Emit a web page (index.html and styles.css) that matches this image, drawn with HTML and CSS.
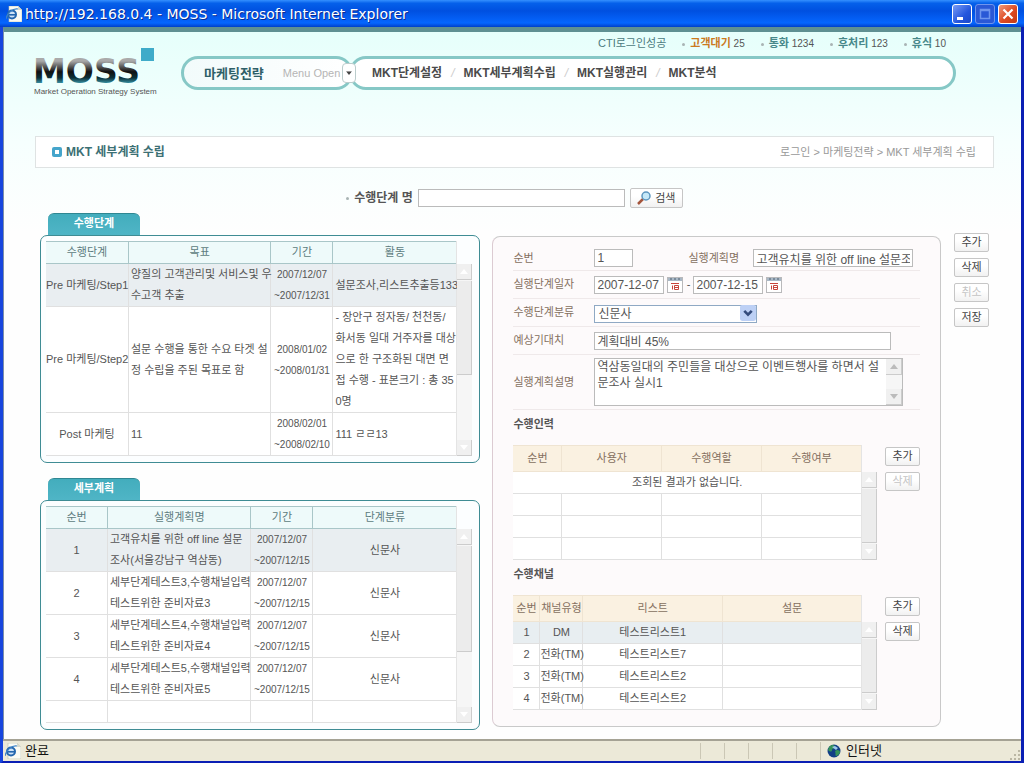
FILE: index.html
```html
<!DOCTYPE html>
<html lang="ko">
<head>
<meta charset="utf-8">
<title>MOSS</title>
<link rel="stylesheet" href="styles.css">
</head>
<body>
<svg class="defs" aria-hidden="true">
  <symbol id="up" viewBox="0 0 8 5"><path d="M0 5 4 0 8 5Z" fill="currentColor"/></symbol>
  <symbol id="down" viewBox="0 0 8 5"><path d="M0 0 4 5 8 0Z" fill="currentColor"/></symbol>
  <symbol id="calendar" viewBox="0 0 16 16">
    <rect x=".5" y=".5" width="15" height="15" fill="#fff" stroke="#b9b9bb"/>
    <path d="M1 2.500h14" stroke="#a9b8c6" stroke-width="3"/>
    <path d="M4 1v2M8 1v2M12 1v2" stroke="#4d5f70"/>
    <path d="M4 6.500h8M5.500 8.500v4M7.500 8.500h4v4h-4zM7.500 10.500h4" fill="none" stroke="#c8443c"/>
  </symbol>
  <symbol id="ie" viewBox="0 0 16 16">
    <path d="M3 0h9l4 4v12H3z" fill="#fbfbf4" stroke="#b8bfae" stroke-width=".6"/>
    <path d="M12 0v4h4" fill="#d5d9cf"/>
    <circle cx="6" cy="8.500" r="4" fill="#cfe3f7" stroke="#2567ae" stroke-width="2"/>
    <path d="M3 8.800h7" stroke="#2567ae" stroke-width="1.600"/>
    <path d="M0 13C1 7 7 2 12 3" fill="none" stroke="#3c83c8" stroke-width="1.200"/>
  </symbol>
</svg>

<div class="window">
  <header class="titlebar">
    <svg class="title-icon" aria-hidden="true"><use href="#ie"/></svg>
    <span class="title-text">http://192.168.0.4 - MOSS - Microsoft Internet Explorer</span>
    <button class="win-btn" aria-label="최소화"><svg viewBox="0 0 18 18"><path d="M4 13.500h6" stroke="#fff" stroke-width="3"/></svg></button>
    <button class="win-btn win-dim" aria-label="최대화" disabled><svg viewBox="0 0 18 18"><path d="M4.500 4.500h9v9h-9zM4 5.500h10" fill="none" stroke="#6f95ee" stroke-width="1.500"/></svg></button>
    <button class="win-btn win-close" aria-label="닫기"><svg viewBox="0 0 18 18"><path d="m4.500 4.500 9 9m0-9-9 9" stroke="#fff" stroke-width="2.200"/></svg></button>
  </header>

  <div class="page">
    <div class="header">
      <svg class="logo" viewBox="0 0 120 52" role="img" aria-label="MOSS">
        <defs><linearGradient id="lg" x1="0" y1="13" x2="0" y2="37" gradientUnits="userSpaceOnUse">
          <stop offset="0" stop-color="#aaa"/><stop offset=".45" stop-color="#111"/><stop offset=".7" stop-color="#0c3038"/><stop offset="1" stop-color="#46b2c8"/>
        </linearGradient></defs>
        <rect x="106" y="0" width="13" height="13" fill="#3fabc9"/>
        <text class="logo-word" x="-2" y="35" fill="url(#lg)">MOSS</text>
        <text class="logo-sub" x="-1" y="46">Market Operation Strategy System</text>
      </svg>
      <div class="header-main">
        <ul class="status">
          <li class="cti">CTI로그인성공</li>
          <li class="dot hot"><b>고객대기</b> 25</li>
          <li class="dot"><b>통화</b> 1234</li>
          <li class="dot"><b>후처리</b> 123</li>
          <li class="dot"><b>휴식</b> 10</li>
        </ul>
        <nav class="menu">
          <div class="pill pill-current"><strong>마케팅전략</strong><span>Menu Open</span>
            <button class="toggle" aria-label="메뉴 열기"><svg viewBox="0 0 8 5"><use href="#down"/></svg></button>
          </div>
          <div class="pill pill-links">
            <a href="#">MKT단계설정</a><i>/</i><a href="#">MKT세부계획수립</a><i>/</i><a href="#">MKT실행관리</a><i>/</i><a href="#">MKT분석</a>
          </div>
        </nav>
      </div>
    </div>

    <div class="crumbs">
      <h1><svg viewBox="0 0 10 10" aria-hidden="true"><rect width="10" height="10" rx="2" fill="#45a5cb"/><rect x="3" y="3" width="4" height="4" fill="#fff"/></svg>MKT 세부계획 수립</h1>
      <span>로그인 &gt; 마케팅전략 &gt; MKT 세부계획 수립</span>
    </div>

    <form class="search">
      <label class="dot" for="q">수행단계 명</label>
      <input id="q" type="text">
      <button class="btn btn-search" type="button"><svg viewBox="0 0 14 14" aria-hidden="true"><path d="m1 13 5-5" stroke="#a4553c" stroke-width="2.500"/><circle cx="9" cy="5" r="4" fill="#c5e8f8" stroke="#5d96bf" stroke-width="1.500"/></svg>검색</button>
    </form>

    <main class="content">
      <div class="left">
        <section>
          <h2 class="tab">수행단계</h2>
          <div class="panel">
            <table class="grid">
              <colgroup><col class="w82"><col><col class="w62"><col class="w124"></colgroup>
              <thead><tr><th>수행단계</th><th>목표</th><th>기간</th><th>활동</th></tr></thead>
              <tbody>
                <tr class="sel"><td class="c tight">Pre 마케팅/Step1</td><td>양질의 고객관리및 서비스및 우<br>수고객 추출</td><td class="date">2007/12/07<br>~2007/12/31</td><td>설문조사,리스트추출등133</td></tr>
                <tr><td class="c tight">Pre 마케팅/Step2</td><td>설문 수행을 통한 수요 타겟 설<br>정 수립을 주된 목표로 함</td><td class="date">2008/01/02<br>~2008/01/31</td><td>- 장안구 정자동/ 천천동/<br>화서동 일대 거주자를 대상<br>으로 한 구조화된 대면 면<br>접 수행 - 표본크기 : 총 35<br>0명</td></tr>
                <tr><td class="c tight">Post 마케팅</td><td>11</td><td class="date">2008/02/01<br>~2008/02/10</td><td>111 ㄹㄹ13</td></tr>
              </tbody>
            </table>
            <div class="bar bar-main"><button class="arrow" aria-label="위로"><svg><use href="#up"/></svg></button><div class="thumb thumb-a"></div><div class="track track-a"></div><button class="arrow" aria-label="아래로"><svg><use href="#down"/></svg></button></div>
          </div>
        </section>
        <section>
          <h2 class="tab">세부계획</h2>
          <div class="panel">
            <table class="grid">
              <colgroup><col class="w61"><col><col class="w62"><col class="w144"></colgroup>
              <thead><tr><th>순번</th><th>실행계획명</th><th>기간</th><th>단계분류</th></tr></thead>
              <tbody>
                <tr class="sel"><td class="c">1</td><td>고객유치를 위한 off line 설문<br>조사(서울강남구 역삼동)</td><td class="date">2007/12/07<br>~2007/12/15</td><td class="c">신문사</td></tr>
                <tr><td class="c">2</td><td>세부단계테스트3,수행채널입력<br>테스트위한 준비자료3</td><td class="date">2007/12/07<br>~2007/12/15</td><td class="c">신문사</td></tr>
                <tr><td class="c">3</td><td>세부단계테스트4,수행채널입력<br>테스트위한 준비자료4</td><td class="date">2007/12/07<br>~2007/12/15</td><td class="c">신문사</td></tr>
                <tr><td class="c">4</td><td>세부단계테스트5,수행채널입력<br>테스트위한 준비자료5</td><td class="date">2007/12/07<br>~2007/12/15</td><td class="c">신문사</td></tr>
                <tr class="blank"><td></td><td></td><td></td><td></td></tr>
              </tbody>
            </table>
            <div class="bar bar-main"><button class="arrow" aria-label="위로"><svg><use href="#up"/></svg></button><div class="thumb thumb-b"></div><div class="track track-b"></div><button class="arrow" aria-label="아래로"><svg><use href="#down"/></svg></button></div>
          </div>
        </section>
      </div>

      <section class="detail">
        <form class="form">
          <div class="row row-first">
            <label for="no">순번</label><input id="no" class="w-no" type="text" value="1">
            <label class="second" for="plan">실행계획명</label><input id="plan" class="w-plan" type="text" value="고객유치를 위한 off line 설문조사(서울강남구 역삼동)">
          </div>
          <div class="row">
            <label for="from">실행단계일자</label><input id="from" class="w-date" type="text" value="2007-12-07">
            <button class="cal" type="button" aria-label="시작일 선택"><svg><use href="#calendar"/></svg></button><span class="dash">-</span>
            <input class="w-date" type="text" value="2007-12-15" aria-label="종료일">
            <button class="cal" type="button" aria-label="종료일 선택"><svg><use href="#calendar"/></svg></button>
          </div>
          <div class="row">
            <label for="kind">수행단계분류</label>
            <div class="select"><select id="kind"><option>신문사</option></select><svg viewBox="0 0 15 15" aria-hidden="true"><rect width="15" height="15" rx="2" fill="#bdd0f5"/><path d="m4 5.500 3.500 3.500L11 5.500" fill="none" stroke="#344b7c" stroke-width="2.500"/></svg></div>
          </div>
          <div class="row">
            <label for="hope">예상기대치</label><input id="hope" class="w-hope" type="text" value="계획대비 45%">
          </div>
          <div class="row row-area">
            <label for="desc">실행계획설명</label>
            <div class="area"><textarea id="desc">역삼동일대의 주민들을 대상으로 이벤트행사를 하면서 설문조사 실시1</textarea><div class="bar bar-area"><button class="arrow" type="button" aria-label="위로"><svg><use href="#up"/></svg></button><div class="track track-area"></div><button class="arrow" type="button" aria-label="아래로"><svg><use href="#down"/></svg></button></div></div>
          </div>
        </form>

        <h3>수행인력</h3>
        <div class="sub">
          <table class="grid beige">
            <colgroup><col class="w48"><col><col class="w100"><col class="w100"></colgroup>
            <thead><tr><th>순번</th><th>사용자</th><th>수행역할</th><th>수행여부</th></tr></thead>
            <tbody>
              <tr><td class="c" colspan="4">조회된 결과가 없습니다.</td></tr>
              <tr class="blank"><td></td><td></td><td></td><td></td></tr>
              <tr class="blank"><td></td><td></td><td></td><td></td></tr>
              <tr class="blank"><td></td><td></td><td></td><td></td></tr>
            </tbody>
          </table>
          <div class="bar bar-sub"><button class="arrow" aria-label="위로"><svg><use href="#up"/></svg></button><div class="thumb"></div><button class="arrow" aria-label="아래로"><svg><use href="#down"/></svg></button></div>
          <div class="btns"><button class="btn">추가</button><button class="btn" disabled>삭제</button></div>
        </div>

        <h3>수행채널</h3>
        <div class="sub">
          <table class="grid beige">
            <colgroup><col class="w26"><col class="w43"><col><col class="w139"></colgroup>
            <thead><tr><th>순번</th><th>채널유형</th><th>리스트</th><th>설문</th></tr></thead>
            <tbody>
              <tr class="sel"><td class="c">1</td><td class="c tight">DM</td><td class="c">테스트리스트1</td><td></td></tr>
              <tr><td class="c">2</td><td class="c tight">전화(TM)</td><td class="c">테스트리스트7</td><td></td></tr>
              <tr><td class="c">3</td><td class="c tight">전화(TM)</td><td class="c">테스트리스트2</td><td></td></tr>
              <tr><td class="c">4</td><td class="c tight">전화(TM)</td><td class="c">테스트리스트2</td><td></td></tr>
            </tbody>
          </table>
          <div class="bar bar-sub"><button class="arrow" aria-label="위로"><svg><use href="#up"/></svg></button><div class="thumb"></div><button class="arrow" aria-label="아래로"><svg><use href="#down"/></svg></button></div>
          <div class="btns"><button class="btn">추가</button><button class="btn">삭제</button></div>
        </div>
      </section>

      <div class="btns btns-side"><button class="btn">추가</button><button class="btn">삭제</button><button class="btn" disabled>취소</button><button class="btn">저장</button></div>
    </main>
  </div>

  <footer class="statusbar">
    <svg class="title-icon" aria-hidden="true"><use href="#ie"/></svg>
    <span class="done">완료</span>
    <i></i><i></i><i></i><i></i><i></i>
    <span class="zone"><svg viewBox="0 0 14 14" aria-hidden="true"><circle cx="7" cy="7" r="6.500" fill="#123f86"/><path d="M2 3c3-3 6-2 6 0S5 4 5 6 3 8 1 6zM8 7c2-2 5-1 5 1s-3 4-4 4 0-3-1-5z" fill="#35935a"/><path d="m5 3 3-1 3 2-2 2z" fill="#9cc8ec"/></svg>인터넷</span>
    <svg class="grip" viewBox="0 0 12 12" aria-hidden="true"><path d="M9 1h2v2H9zM5 5h2v2H5zM9 5h2v2H9zM1 9h2v2H1zM5 9h2v2H5zM9 9h2v2H9z" fill="#bbb7a4"/></svg>
  </footer>
</div>
</body>
</html>
```

FILE: styles.css
```css
* { box-sizing: border-box; }
body { margin: 0; font: 11px/21px "Liberation Sans", "Noto Sans CJK KR", sans-serif; color: #555; }
h1, h2, h3, ul { margin: 0; padding: 0; list-style: none; }
button, input, select, textarea { margin: 0; font: inherit; color: inherit; border-radius: 0; }
button { padding: 0; }
.defs { position: absolute; width: 0; height: 0; }

/* Window frame */
.window { display: flex; flex-direction: column; min-height: 100vh; border: solid #0a1fb4; border-width: 0 3px 3px; border-left-color: #1745de; }
.titlebar { display: flex; align-items: center; gap: 3px; height: 27px; margin: 0 -3px; padding: 0 6px; background: linear-gradient(#3590ff, #0560ea 12%, #0050e0 40%, #0566ff 85%, #0040c8); }
.title-icon { width: 16px; height: 16px; flex: none; }
.title-text { flex: 1; font: 14px/20px "DejaVu Sans", sans-serif; color: #fff; text-shadow: 1px 1px 0 #0a2a90; }
.win-btn { width: 20px; height: 20px; border: 1px solid #fff; border-radius: 3px; background: linear-gradient(135deg, #7a9cf5, #2456dd 60%, #1a47c8); }
.win-btn svg { display: block; width: 18px; height: 18px; }
.win-dim { border-color: #6f95ee; background: #2a58d6; }
.win-close { background: linear-gradient(135deg, #f09a7c, #dd4a22 55%, #c23a14); }

.page { flex: 1; padding: 0 27px 9px 31px; border-left: 1px solid #7d8fa8; border-top: 5px solid #5f9092; background: linear-gradient(#e6fffb, #f6fffe 110px, #fefefe 200px); }

/* Header */
.header { display: flex; gap: 26px; padding: 0 38px 36px 0; }
.logo { flex: none; width: 120px; height: 52px; margin-top: 16px; overflow: visible; }
.logo-word { font: bold 33px "DejaVu Sans", sans-serif; }
.logo-sub { font: 8px "Liberation Sans", sans-serif; fill: #555; }
.header-main { flex: 1; }
.status { display: flex; justify-content: flex-end; gap: 16px; height: 24px; padding-right: 10px; line-height: 22px; font-size: 10px; }
.status b, .cti { font-size: 11px; font-weight: bold; color: #47888a; }
.status .hot b { color: #cb7a1e; }
.status .cti { color: #4c7b80; font-weight: normal; -webkit-text-stroke: 0; }
.dot::before { content: ""; display: inline-block; width: 3px; height: 3px; margin-right: 5px; border-radius: 50%; background: #a9b4b4; vertical-align: middle; }
.menu { display: flex; }
.pill { display: flex; align-items: center; height: 34px; border: 3px solid #86c8c6; border-radius: 17px; background: #fff; }
.pill-current { position: relative; flex: none; width: 172px; padding-left: 20px; gap: 19px; font-size: 13px; color: #2f6068; background: linear-gradient(90deg, #f2fbfb, #fff); }
.pill-current span { font-size: 11px; color: #b5b5b5; }
.toggle { position: absolute; right: -6px; top: 4px; z-index: 1; width: 14px; height: 20px; display: grid; place-items: center; border: 1px solid #bcc; border-radius: 4px; background: #fff; color: #444; }
.toggle svg { width: 6px; height: 4px; }
.pill-links { flex: 1; margin-left: -4px; padding-left: 20px; gap: 9px; font-size: 12px; font-weight: bold; }
.pill-links a { color: #4a4a4a; text-decoration: none; }
.pill-links i { font-weight: normal; color: #ccc; }

.crumbs { display: flex; justify-content: space-between; align-items: center; height: 32px; padding: 0 17px 0 16px; border: 1px solid #dfe3e3; background: #fff; color: #999; }
.crumbs h1 { display: flex; align-items: center; gap: 4px; font-size: 12px; color: #3c7074; }
.crumbs svg { width: 10px; height: 10px; }

/* Shared controls */
.btn { width: 35px; height: 19px; border: 1px solid #c6c6c6; border-radius: 2px; background: linear-gradient(#fff 40%, #f1f1f1); line-height: 17px; color: #444; white-space: nowrap; }
.btn:disabled { color: #c4c4c4; }
.btns { display: flex; flex-direction: column; gap: 6px; }
input, textarea { height: 18px; padding: 0 2px; border: 1px solid #bbb; background: #fff; font-size: 12px; line-height: 16px; min-width: 0; }

.search { display: flex; justify-content: center; align-items: center; gap: 5px; padding: 20px 0 5px; }
.search label { font-size: 12px; font-weight: bold; color: #555; line-height: 20px; }
.search input { width: 207px; }
.search .btn { display: flex; align-items: center; justify-content: center; gap: 4px; width: 53px; height: 20px; }
.search svg { width: 14px; height: 14px; }

.content { display: grid; grid-template-columns: minmax(0, 452fr) minmax(0, 461fr) 35px; padding: 0 5px; }
.left { display: flex; flex-direction: column; gap: 15px; margin-right: 12px; }

/* Left panels */
.tab { width: 92px; height: 22px; margin-left: 8px; border-top: 1px solid #2f8792; border-radius: 6px 6px 0 0; background: linear-gradient(#43adbd, #4fb5c6); color: #fff; font-size: 11px; line-height: 18px; text-align: center; }
.panel { display: flex; padding: 5px 7px 6px 5px; border: 1px solid #3f8c94; border-radius: 7px; background: #fcfeff; }
.grid { flex: 1; width: 0; min-width: 0; table-layout: fixed; border-collapse: separate; border-spacing: 0; border-right: 1px solid #e4e4e4; background: #fff; }
.grid th { height: 23px; padding: 0; border: solid #a9c6c8; border-width: 1px 0 1px 1px; background: #eefafa; font-weight: normal; line-height: 21px; color: #5d7c80; white-space: nowrap; }
.grid th:first-child { border-left: 0; }
.grid td { padding: 0 0 0 2px; border: solid #e0e0e0; border-width: 0 0 1px 1px; white-space: nowrap; }
.grid td:first-child { border-left: 0; }
.grid .c { padding: 0; text-align: center; }
.grid .date { padding: 0; text-align: center; font-size: 10px; }
.grid .sel td { background: #e9eef1; }
.grid .blank { height: 22px; }
.w26 { width: 26px; } .w43 { width: 43px; } .w48 { width: 48px; }
.w61 { width: 61px; } .w62 { width: 62px; } .w82 { width: 82px; }
.w100 { width: 100px; } .w124 { width: 124px; } .w139 { width: 139px; } .w144 { width: 144px; }

/* Scroll strips */
.bar { display: flex; flex-direction: column; flex: none; width: 15px; background: #f6f6f6; }
.bar-main { margin-top: 23px; }
.bar-sub { margin-top: 27px; }
.arrow { display: grid; place-items: center; height: 16px; border: solid #ccc; border-width: 0 1px 1px 0; background: #f0f0f0; color: #fff; }
.arrow svg { width: 8px; height: 5px; }
.thumb { flex: 1; margin: 1px 0; border: solid #ccc; border-width: 0 1px 1px 0; background: #ececec; }
.thumb-a { flex: 95; } .track-a { flex: 65; }
.thumb-b { flex: 110; } .track-b { flex: 56; }

/* Detail panel */
.detail { align-self: start; margin: 23px 13px 0 0; padding: 9px 20px 16px; border: 1px solid #c9c9c9; border-left-color: #dccbd2; border-radius: 8px; background: #fdfafb; }
.row { display: flex; align-items: center; height: 28px; border-bottom: 1px solid #efe9ea; }
.row-first { height: 25px; }
.row-area { height: 55px; }
.row label { flex: none; width: 81px; color: #85705f; }
.row .second { width: 65px; margin-left: 55px; }
.w-no { width: 39px; } .w-plan { width: 160px; } .w-date { width: 70px; } .w-hope { width: 297px; }
.cal { width: 16px; height: 16px; margin-left: 3px; border: 0; background: none; }
.cal svg { display: block; width: 16px; height: 16px; }
.dash { width: 10px; text-align: center; }
.select { position: relative; width: 163px; height: 18px; }
.select select { width: 100%; height: 18px; padding: 0 18px 0 3px; border: 1px solid #8fa9c4; background: #fff; appearance: none; font-size: 12px; line-height: 16px; }
.select svg { position: absolute; right: 1px; top: 1px; width: 16px; height: 16px; pointer-events: none; }
.area { position: relative; width: 309px; height: 48px; }
.area textarea { display: block; width: 100%; height: 100%; padding: 0 20px 0 2px; resize: none; overflow: hidden; word-break: break-all; }
.bar-area { position: absolute; top: 1px; right: 1px; bottom: 1px; width: 16px; }
.bar-area .arrow { color: #bbb; }
.track-area { flex: 1; }
.detail h3 { height: 35px; font-size: 11px; line-height: 28px; color: #555; }
.sub { display: flex; }
.sub .btns { margin: 2px 0 0 8px; }
.beige th { height: 27px; border-color: #efe4d2; background: #faf1e1; color: #85705f; }
.beige td { height: 22px; }
.sub .sel td { background: #e8eef1; }
.btns-side { margin-top: 20px; }

/* Status bar */
.statusbar { display: flex; align-items: center; height: 22px; padding-left: 2px; border-top: 2px solid #a5a294; background: #ece9d8; font-size: 13px; line-height: 18px; color: #111; }
.done { flex: 1; margin-left: 4px; }
.statusbar i { width: 24px; height: 16px; border-left: 1px solid #cbc7b5; }
.zone { display: flex; align-items: center; gap: 5px; width: 189px; padding-left: 6px; border-left: 1px solid #cbc7b5; }
.zone svg { width: 14px; height: 14px; }
.grip { width: 12px; height: 12px; align-self: flex-end; }
```
